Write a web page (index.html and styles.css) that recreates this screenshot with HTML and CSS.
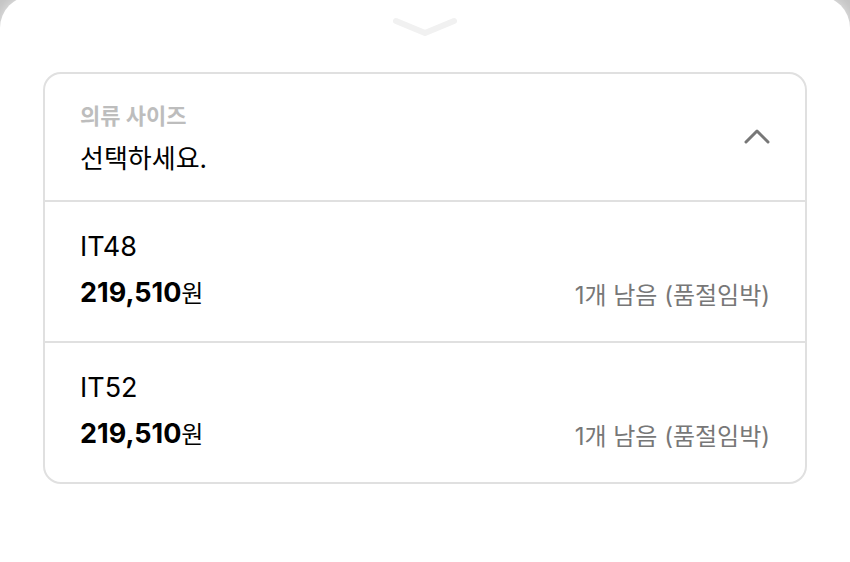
FILE: index.html
```html
<!DOCTYPE html>
<html lang="ko">
<head>
  <meta charset="UTF-8">
  <meta name="viewport" content="width=device-width, initial-scale=1.0">
  <title>의류 사이즈</title>
  <link rel="stylesheet" href="styles.css">
</head>
<body>

  <main class="sheet">
    <button type="button" class="sheet-handle" aria-label="닫기">
      <svg width="66" height="20" viewBox="0 0 66 20" fill="none" stroke="#f1f1f1" stroke-width="6" stroke-linecap="round" stroke-linejoin="round">
        <path d="M4 5 L33 17 L62 5"/>
      </svg>
    </button>

    <section class="dropdown">
      <button type="button" class="dropdown-header" aria-expanded="true" aria-controls="size-list">
        <span class="dropdown-text">
          <span class="dropdown-label">의류 사이즈</span>
          <span class="dropdown-value">선택하세요.</span>
        </span>
        <svg width="28" height="24" viewBox="0 0 28 24" fill="none" stroke="#777" stroke-width="3" stroke-linecap="round" stroke-linejoin="round">
          <path d="M3 15 L14 4 L25 15"/>
        </svg>
      </button>

      <ul class="option-list" id="size-list">
        <li>
          <button type="button" class="option">
            <span class="option-info">
              <span class="option-name">IT48</span>
              <span class="option-price"><strong>219,510</strong>원</span>
            </span>
            <span class="option-stock">1개 남음 (품절임박)</span>
          </button>
        </li>
        <li>
          <button type="button" class="option">
            <span class="option-info">
              <span class="option-name">IT52</span>
              <span class="option-price"><strong>219,510</strong>원</span>
            </span>
            <span class="option-stock">1개 남음 (품절임박)</span>
          </button>
        </li>
      </ul>
    </section>
  </main>

</body>
</html>
```
FILE: styles.css
```css
* {
  box-sizing: border-box;
}
body {
  margin: 0;
  background-color: #c4c4c4;
  font-family: Inter, "Noto Sans CJK KR", sans-serif;
  color: #000;
  overflow: hidden;
}
button {
  border: none;
  background: none;
  padding: 0;
  font: inherit;
  color: inherit;
  text-align: left;
  cursor: pointer;
}

/* Panel inferior */
.sheet {
  min-height: calc(100vh + 4px);
  margin-top: -4px;
  padding: 16px 43px 40px;
  background: #fff;
  border-radius: 32px 32px 0 0;
  box-shadow: 0 0 12px rgba(255,255,255,0.6);
}
.sheet-handle {
  display: flex;
  justify-content: center;
  width: 100%;
  padding: 4px 0;
  margin-bottom: 32px;
}

.dropdown {
  border: 2px solid #e0e0e0;
  border-radius: 18px;
  overflow: hidden;
}
.dropdown-header {
  display: flex;
  justify-content: space-between;
  align-items: center;
  width: 100%;
  padding: 24px 34px 20px 35px;
}
.dropdown-text {
  display: flex;
  flex-direction: column;
  gap: 4px;
}
.dropdown-label {
  font-size: 22px;
  font-weight: bold;
  line-height: 36px;
  color: #bdbdbd;
}
.dropdown-value {
  font-size: 26px;
  line-height: 42px;
}

.option-list {
  list-style: none;
  margin: 0;
  padding: 0;
}
.option {
  display: flex;
  justify-content: space-between;
  align-items: flex-end;
  width: 100%;
  padding: 22px 35px 24px;
  border-top: 2px solid #e0e0e0;
}
.option-info {
  display: flex;
  flex-direction: column;
}
.option-name {
  font-size: 27px;
  line-height: 46px;
}
.option-price {
  font-size: 24px;
  line-height: 46px;
}
.option-price strong {
  font-size: 27px;
}
.option-stock {
  font-size: 24px;
  line-height: 42px;
  color: #777;
}
```
